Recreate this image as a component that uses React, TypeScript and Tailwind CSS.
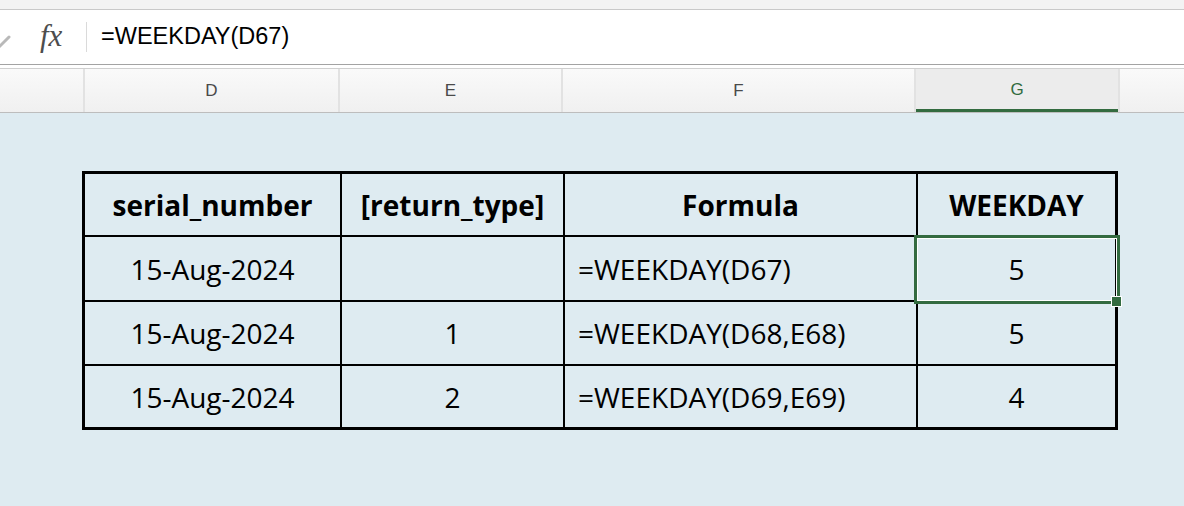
const cols = [
  { letter: "D", width: "w-[255px]" },
  { letter: "E", width: "w-[223px]" },
  { letter: "F", width: "w-[353px]" },
  { letter: "G", width: "w-[202px]" },
];

type Row = {
  serial: string;
  returnType: string;
  formula: string;
  result: string;
  height: string;
};

const rows: Row[] = [
  { serial: "15-Aug-2024", returnType: "", formula: "=WEEKDAY(D67)", result: "5", height: "h-[65px]" },
  { serial: "15-Aug-2024", returnType: "1", formula: "=WEEKDAY(D68,E68)", result: "5", height: "h-[64px]" },
  { serial: "15-Aug-2024", returnType: "2", formula: "=WEEKDAY(D69,E69)", result: "4", height: "h-[61px]" },
];

function FormulaBar() {
  return (
    <div className="h-[54px] bg-white flex items-center relative">
      {/* edge of the pencil icon, cut off by the window */}
      <svg className="absolute left-0 top-[25px]" width="12" height="14" viewBox="0 0 12 14">
        <path d="M-2 13 L9 2" stroke="#b9b9b9" strokeWidth="3" strokeLinecap="round" />
      </svg>
      <span className="ml-[40px] w-[34px] text-[31px] italic text-[#4d4d4d] font-['Liberation_Serif',serif] leading-none -mt-[4px]">
        fx
      </span>
      <div className="ml-[12px] w-px h-[30px] bg-[#dadada]" />
      <span className="ml-[14px] text-[23.5px] text-black font-['Liberation_Sans',Arial,sans-serif] leading-none">
        =WEEKDAY(D67)
      </span>
    </div>
  );
}

function ColumnHeaders() {
  return (
    <div>
      <div className="h-px bg-[#a3a3a3]" />
      <div className="h-[3px] bg-white" />
      <div className="h-px bg-[#cfcfcf]" />
      <div className="h-[44px] flex bg-gradient-to-b from-[#fafafa] to-[#f0f0f0] border-b border-[#bdbdbd] font-['Liberation_Sans',Arial,sans-serif] text-[17px]">
        <div className="w-[85px] border-r-2 border-[#e2e2e2]" />
        {cols.map((c) =>
          c.letter === "G" ? (
            <div
              key={c.letter}
              className={`${c.width} bg-[#ececec] border-b-[3px] border-[#336b40] flex items-center justify-center text-[#2f6b3e] pt-[2px]`}
            >
              {c.letter}
            </div>
          ) : (
            <div
              key={c.letter}
              className={`${c.width} border-r-2 border-[#e2e2e2] flex items-center justify-center text-[#4a4a4a]`}
            >
              {c.letter}
            </div>
          )
        )}
        <div className="flex-1 border-l-2 border-[#e2e2e2]" />
      </div>
    </div>
  );
}

function DataTable() {
  return (
    <div className="ml-[82px] mt-[58px] w-[1036px] border-[3px] border-black text-[28px] text-black font-['Open_Sans',sans-serif]">
      <div className="flex h-[63px] border-b-2 border-black font-bold">
        <div className="w-[257px] border-r-2 border-black flex items-center justify-center">serial_number</div>
        <div className="w-[223px] border-r-2 border-black flex items-center justify-center">[return_type]</div>
        <div className="w-[353px] border-r-2 border-black flex items-center justify-center">Formula</div>
        <div className="flex-1 flex items-center justify-center">WEEKDAY</div>
      </div>
      {rows.map((r, i) => (
        <div key={i} className={`flex ${r.height} ${i < rows.length - 1 ? "border-b-2 border-black" : ""}`}>
          <div className="w-[257px] border-r-2 border-black flex items-center justify-center">{r.serial}</div>
          <div className="w-[223px] border-r-2 border-black flex items-center justify-center">{r.returnType}</div>
          <div className="w-[353px] border-r-2 border-black flex items-center pl-[13px]">{r.formula}</div>
          <div className="flex-1 flex items-center justify-center relative">
            {i === 0 && (
              <>
                <div className="absolute -left-[4px] -top-[2px] w-[206px] h-[69px] border-[3px] border-[#336b40]">
                  <div className="w-full h-full border border-white" />
                </div>
                <div className="absolute left-[193px] top-[59px] w-[11px] h-[11px] bg-[#336b40] border border-white" />
              </>
            )}
            <span className="relative">{r.result}</span>
          </div>
        </div>
      ))}
    </div>
  );
}

export default function App() {
  return (
    <div className="w-[1184px] h-[506px] overflow-hidden bg-[#deebf1]">
      <div className="h-[10px] bg-[#f3f3f3] border-b border-[#c9c9c9]" />
      <FormulaBar />
      <ColumnHeaders />
      <DataTable />
    </div>
  );
}
